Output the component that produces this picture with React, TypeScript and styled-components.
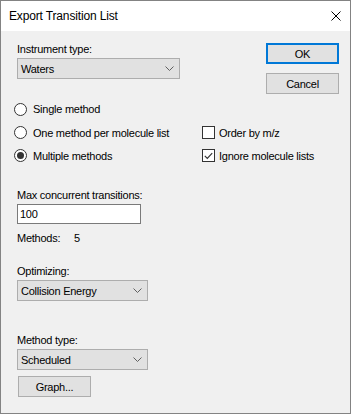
import React from "react";
import styled, { createGlobalStyle } from "styled-components";

const GlobalStyle = createGlobalStyle`
  html, body {
    margin: 0;
    padding: 0;
    background: #ffffff;
  }
  body {
    font-family: "Liberation Sans", Arial, sans-serif;
    font-size: 11px;
    letter-spacing: -0.25px;
    color: #000;
  }
`;

const Window = styled.div`
  width: 351px;
  height: 414px;
  box-sizing: border-box;
  border: 1px solid #838383;
  display: flex;
  flex-direction: column;
  background: #f0f0f0;
`;

const TitleBar = styled.div`
  height: 30px;
  background: #ffffff;
  display: flex;
  align-items: center;
  justify-content: space-between;
  padding: 0 9px 0 8px;
  font-size: 12px;
  flex-shrink: 0;
`;

const Title = styled.span`
  margin-top: -1px;
  letter-spacing: -0.15px;
`;

const CloseGlyph = styled.svg`
  width: 10px;
  height: 10px;
  margin-top: -1px;
`;

const Body = styled.div`
  flex: 1;
  display: flex;
  flex-direction: column;
  padding: 12px 11px 0 0;
`;

const TopRow = styled.div`
  display: flex;
  justify-content: space-between;
  align-items: flex-start;
`;

const Field = styled.div<{ $indent?: number; $top?: number }>`
  display: flex;
  flex-direction: column;
  align-items: flex-start;
  margin-left: ${(p) => p.$indent ?? 16}px;
  margin-top: ${(p) => p.$top ?? 0}px;
`;

const Label = styled.div`
  height: 13px;
  line-height: 13px;
  margin-bottom: 2px;
  white-space: nowrap;
`;

const Combo = styled.div<{ $width: number }>`
  width: ${(p) => p.$width}px;
  height: 21px;
  box-sizing: border-box;
  border: 1px solid #adadad;
  background: #e1e1e1;
  display: flex;
  align-items: center;
  justify-content: space-between;
  padding: 0 5px 0 3px;
`;

const Chevron = styled.svg`
  width: 9px;
  height: 5px;
`;

const ButtonStack = styled.div`
  display: flex;
  flex-direction: column;
  gap: 9px;
`;

const Button = styled.div<{ $primary?: boolean }>`
  width: 73px;
  height: 21px;
  box-sizing: border-box;
  border: ${(p) => (p.$primary ? "2px solid #0078d7" : "1px solid #adadad")};
  background: #e1e1e1;
  display: flex;
  align-items: center;
  justify-content: center;
  font-size: 11px;
`;

const OptionGrid = styled.div`
  display: grid;
  grid-template-columns: 188px 1fr;
  grid-template-rows: 24px 23px 23px;
  margin: 3px 0 0 13px;
`;

const Option = styled.div<{ $row: number; $col: number }>`
  grid-row: ${(p) => p.$row};
  grid-column: ${(p) => p.$col};
  display: flex;
  align-items: center;
  white-space: nowrap;
`;

const RadioCircle = styled.span<{ $checked?: boolean }>`
  width: 13px;
  height: 13px;
  box-sizing: border-box;
  border: 1px solid #333333;
  border-radius: 50%;
  background: #ffffff;
  margin-right: 6px;
  display: flex;
  align-items: center;
  justify-content: center;
  &::after {
    content: "";
    display: ${(p) => (p.$checked ? "block" : "none")};
    width: 7px;
    height: 7px;
    border-radius: 50%;
    background: #333333;
  }
`;

const CheckBox = styled.span`
  width: 13px;
  height: 13px;
  box-sizing: border-box;
  border: 1px solid #333333;
  background: #ffffff;
  margin-right: 4px;
  display: flex;
  align-items: center;
  justify-content: center;
`;

const TextBox = styled.div`
  width: 124px;
  height: 20px;
  box-sizing: border-box;
  border: 1px solid #7a7a7a;
  background: #ffffff;
  display: flex;
  align-items: center;
  padding-left: 2px;
`;

const InfoRow = styled.div`
  display: flex;
  height: 13px;
  line-height: 13px;
  margin: 8px 0 0 16px;
`;

const InfoKey = styled.span`
  width: 57px;
`;

const Radio = ({ row, label, checked }: { row: number; label: string; checked?: boolean }) => (
  <Option $row={row} $col={1}>
    <RadioCircle $checked={checked} />
    {label}
  </Option>
);

const Check = ({ row, label, checked }: { row: number; label: string; checked?: boolean }) => (
  <Option $row={row} $col={2}>
    <CheckBox>
      {checked && (
        <svg width="9" height="8" viewBox="0 0 9 8">
          <path d="M0.8 3.8 L3.3 6.3 L8.2 1.2" fill="none" stroke="#333" strokeWidth="1.2" />
        </svg>
      )}
    </CheckBox>
    {label}
  </Option>
);

const DropDown = ({ value, width }: { value: string; width: number }) => (
  <Combo $width={width}>
    <span>{value}</span>
    <Chevron viewBox="0 0 9 5">
      <path d="M0.5 0.5 L4.5 4.5 L8.5 0.5" fill="none" stroke="#606060" strokeWidth="1" />
    </Chevron>
  </Combo>
);

const App = () => {
  return (
    <>
      <GlobalStyle />
      <Window>
        <TitleBar>
          <Title>Export Transition List</Title>
          <CloseGlyph viewBox="0 0 10 10">
            <path d="M0.5 0.5 L9.5 9.5 M9.5 0.5 L0.5 9.5" stroke="#000" strokeWidth="1" />
          </CloseGlyph>
        </TitleBar>
        <Body>
          <TopRow>
            <Field>
              <Label>Instrument type:</Label>
              <DropDown value="Waters" width={163} />
            </Field>
            <ButtonStack>
              <Button $primary>OK</Button>
              <Button>Cancel</Button>
            </ButtonStack>
          </TopRow>
          <OptionGrid>
            <Radio row={1} label="Single method" />
            <Radio row={2} label="One method per molecule list" />
            <Radio row={3} label="Multiple methods" checked />
            <Check row={2} label="Order by m/z" />
            <Check row={3} label="Ignore molecule lists" checked />
          </OptionGrid>
          <Field $top={22}>
            <Label>Max concurrent transitions:</Label>
            <TextBox>100</TextBox>
          </Field>
          <InfoRow>
            <InfoKey>Methods:</InfoKey>
            <span>5</span>
          </InfoRow>
          <Field $top={20}>
            <Label>Optimizing:</Label>
            <DropDown value="Collision Energy" width={131} />
          </Field>
          <Field $top={33}>
            <Label>Method type:</Label>
            <DropDown value="Scheduled" width={131} />
          </Field>
          <Field $indent={17} $top={6}>
            <Button>Graph...</Button>
          </Field>
        </Body>
      </Window>
    </>
  );
};

export default App;
